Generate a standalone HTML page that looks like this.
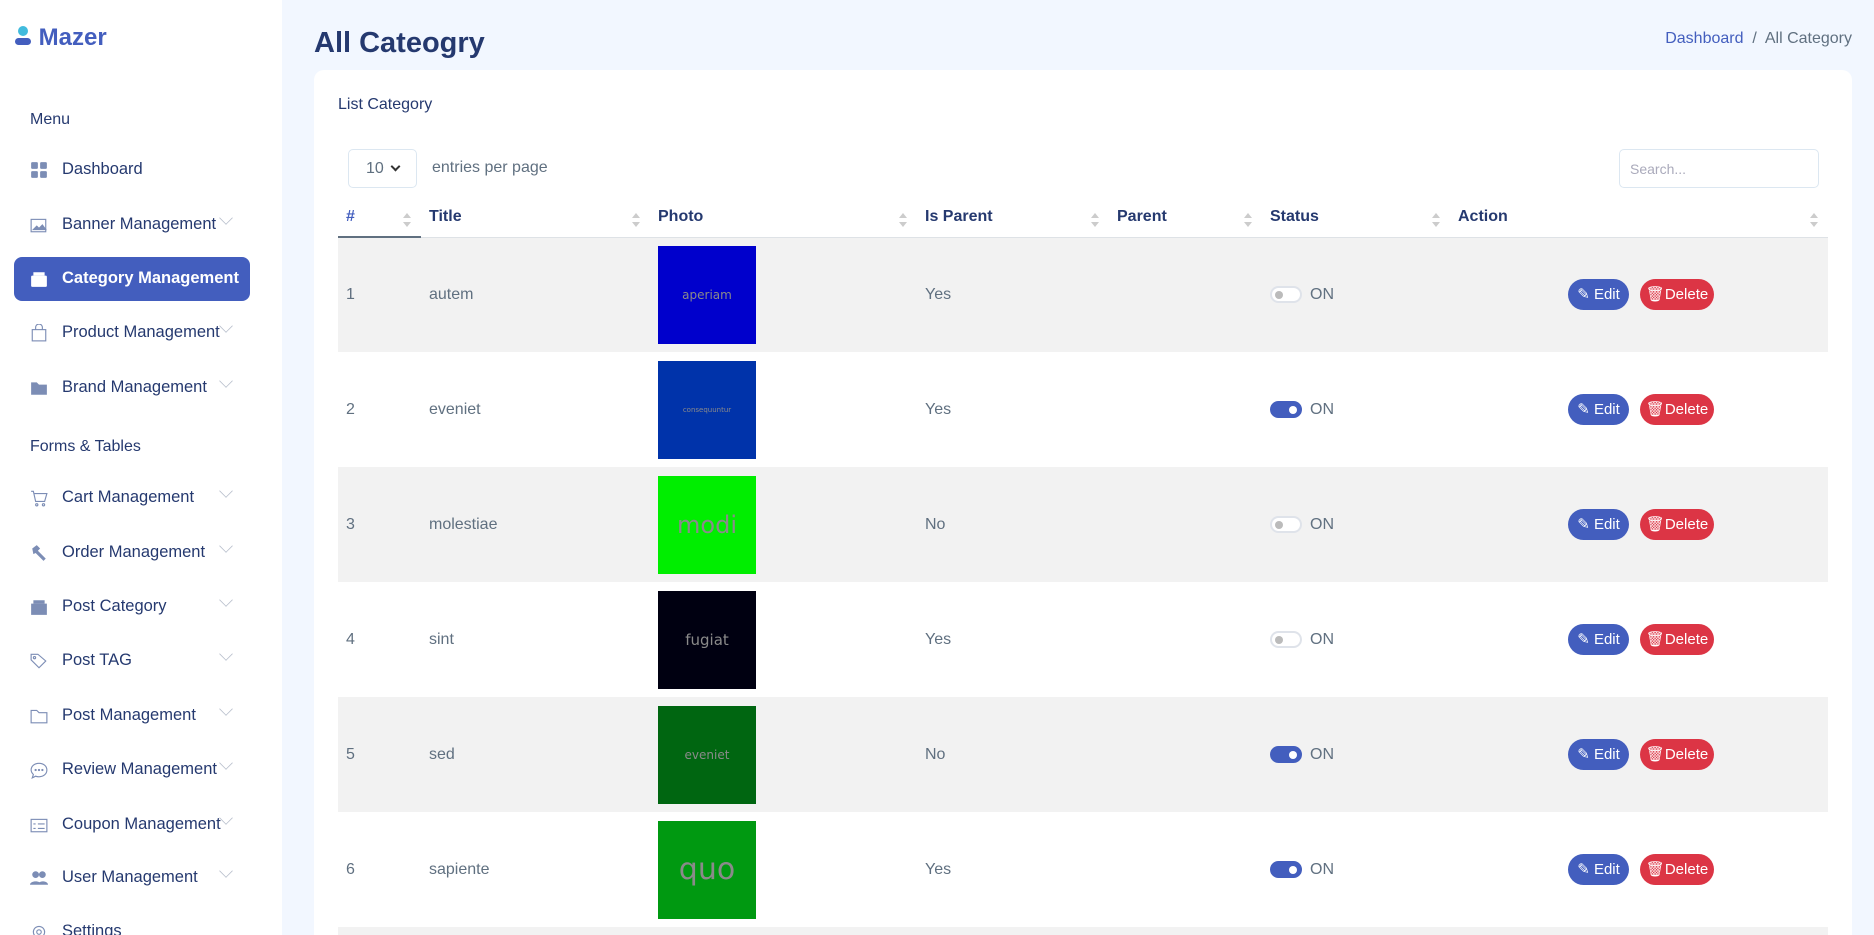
<!DOCTYPE html>
<html><head><meta charset="utf-8"><style>
*{box-sizing:border-box;margin:0;padding:0}
html,body{width:1874px;height:935px;overflow:hidden}
body{background:#f2f7ff;font-family:"Liberation Sans",sans-serif;color:#607080;position:relative}
#w{position:absolute;left:0;top:0;width:1874px;height:935px;overflow:hidden}
.sb{position:absolute;left:0;top:0;width:282px;height:935px;background:#fff}
.abs{position:absolute}
.logo{left:14px;top:24px;font-size:24px;font-weight:bold;color:#435ebe}
.mt{left:30px;font-size:16px;color:#25396f}
.it{position:absolute;left:14px;width:236px;height:44px;font-size:16.5px;color:#25396f}
.it .ic{position:absolute;left:16px;top:13px;width:18px;height:18px}
.it .tx{position:absolute;left:48px;top:12px;white-space:nowrap}
.it .ch{position:absolute;left:206px;top:9px;width:12px;height:12px;border-right:1px solid #b8bfcc;border-bottom:1px solid #b8bfcc;transform:rotate(45deg) scale(.8)}
.it.act{background:#435ebe;border-radius:8px;color:#fff;font-weight:bold}
.card{left:314px;top:70px;width:1538px;height:865px;background:#fff;border-radius:10px 10px 0 0}
table{position:absolute;left:338px;top:197px;width:1490px;border-collapse:collapse;font-size:16px;table-layout:fixed}
th{height:40px;text-align:left;color:#25396f;font-weight:bold;padding-left:8px;border-bottom:1px solid #dee2e6;position:relative}
th:after{content:"";position:absolute;right:10px;top:12px;border:4px solid transparent;border-bottom:5px solid #ccc;height:0}
th:before{content:"";position:absolute;right:10px;top:25px;border:4px solid transparent;border-top:5px solid #ccc;height:0}
td{height:115px;padding-left:8px;color:#607080;vertical-align:middle;white-space:nowrap}
tr.g td{background:#f2f2f2}
tr.last td{height:9px;font-size:0;line-height:0;padding:0}
.ph{width:98px;height:98px;display:flex;align-items:center;justify-content:center;color:#8a8a8a;font-family:"DejaVu Sans",sans-serif}
.tg{display:inline-block;width:32px;height:17px;border-radius:9px;border:2px solid #dfe3ea;background:#fff;position:relative;vertical-align:middle;margin-right:8px}
.tg:after{content:"";position:absolute;left:3px;top:3px;width:8px;height:8px;border-radius:50%;background:#bbb}
.tg.on{background:#435ebe;border-color:#435ebe}
.tg.on:after{left:auto;right:3px;background:#fff}
.b{display:inline-block;height:31px;line-height:31px;border-radius:16px;color:#fff;font-size:15px;white-space:nowrap;text-align:center;vertical-align:middle}
.e{background:#435ebe;width:61px;margin-left:110px}
.d{background:#dc3545;width:74px;margin-left:11px}
</style></head><body><div id="w">
<div class="sb">
<div class="abs logo"><svg width="18" height="20" viewBox="0 0 18 20" style="vertical-align:-1px"><circle cx="9" cy="5" r="5" fill="#41bbdd"/><rect x="1" y="12" width="16" height="7" rx="3.5" fill="#435ebe"/></svg> Mazer</div>
<div class="abs mt" style="top:111px">Menu</div>
<div class="it" style="top:148px"><svg class="ic" viewBox="0 0 16 16"><rect x="1" y="1" width="6" height="6" rx="1" fill="#7c8db5"/><rect x="9" y="1" width="6" height="6" rx="1" fill="#7c8db5"/><rect x="1" y="9" width="6" height="6" rx="1" fill="#7c8db5"/><rect x="9" y="9" width="6" height="6" rx="1" fill="#7c8db5"/></svg><span class="tx">Dashboard</span></div>
<div class="it" style="top:203px"><svg class="ic" viewBox="0 0 16 16" fill="none" stroke="#7c8db5"><rect x="1" y="3" width="13" height="11"/><path d="M3 12l3-3 2 2 3-3 3 4z" fill="#7c8db5"/></svg><span class="tx">Banner Management</span><span class="ch"></span></div>
<div class="it act" style="top:257px"><svg class="ic" viewBox="0 0 16 16"><rect x="1" y="5" width="14" height="10" rx="1" fill="#fff"/><rect x="3" y="2" width="10" height="3" fill="#fff"/></svg><span class="tx">Category Management</span></div>
<div class="it" style="top:311px"><svg class="ic" viewBox="0 0 16 16" fill="none" stroke="#7c8db5"><rect x="2" y="5" width="12" height="10"/><path d="M5 5V3a3 3 0 0 1 6 0v2"/></svg><span class="tx">Product Management</span><span class="ch"></span></div>
<div class="it" style="top:366px"><svg class="ic" viewBox="0 0 16 16"><path d="M1 3h5l2 2h7v9H1z" fill="#7c8db5"/></svg><span class="tx">Brand Management</span><span class="ch"></span></div>
<div class="abs mt" style="top:438px">Forms &amp; Tables</div>
<div class="it" style="top:476px"><svg class="ic" viewBox="0 0 16 16" fill="none" stroke="#7c8db5"><path d="M1 2h2l2 9h8l2-7H4"/><circle cx="6" cy="14" r="1"/><circle cx="12" cy="14" r="1"/></svg><span class="tx">Cart Management</span><span class="ch"></span></div>
<div class="it" style="top:531px"><svg class="ic" viewBox="0 0 16 16"><path d="M2 4l4-3 3 3-2 2 7 7-2 2-7-7-2 1z" fill="#7c8db5"/></svg><span class="tx">Order Management</span><span class="ch"></span></div>
<div class="it" style="top:585px"><svg class="ic" viewBox="0 0 16 16"><rect x="1" y="5" width="14" height="10" fill="#7c8db5"/><rect x="3" y="2" width="10" height="3" fill="#7c8db5"/></svg><span class="tx">Post Category</span><span class="ch"></span></div>
<div class="it" style="top:639px"><svg class="ic" viewBox="0 0 16 16" fill="none" stroke="#7c8db5"><path d="M1 2v5l7 7 6-6-7-6z"/><circle cx="4" cy="5" r="1"/></svg><span class="tx">Post TAG</span><span class="ch"></span></div>
<div class="it" style="top:694px"><svg class="ic" viewBox="0 0 16 16" fill="none" stroke="#7c8db5"><path d="M1 3h5l2 2h7v9H1z"/></svg><span class="tx">Post Management</span><span class="ch"></span></div>
<div class="it" style="top:748px"><svg class="ic" viewBox="0 0 16 16" fill="none" stroke="#7c8db5"><path d="M8 2c4 0 7 2.5 7 6s-3 6-7 6c-1 0-2 0-3-.5L2 15l1-3C2 11 1 9.5 1 8c0-3.5 3-6 7-6z"/><circle cx="5" cy="8" r=".5"/><circle cx="8" cy="8" r=".5"/><circle cx="11" cy="8" r=".5"/></svg><span class="tx">Review Management</span><span class="ch"></span></div>
<div class="it" style="top:803px"><svg class="ic" viewBox="0 0 16 16" fill="none" stroke="#7c8db5"><rect x="1" y="3" width="14" height="11"/><path d="M7 7h6M7 11h6M3 7h2M3 11h2"/></svg><span class="tx">Coupon Management</span><span class="ch"></span></div>
<div class="it" style="top:856px"><svg class="ic" viewBox="0 0 16 16" fill="#7c8db5"><circle cx="5" cy="5" r="3"/><circle cx="11" cy="5" r="3"/><path d="M0 14c0-4 10-4 10 0zM7 14c0-4 9-4 9 0z"/></svg><span class="tx">User Management</span><span class="ch"></span></div>
<div class="abs" style="left:14px;top:910px;width:236px;height:25px;overflow:hidden;font-size:16.5px;color:#25396f"><svg style="position:absolute;left:16px;top:13px" width="18" height="18" viewBox="0 0 16 16" fill="none" stroke="#7c8db5"><circle cx="8" cy="8" r="5"/><circle cx="8" cy="8" r="2"/></svg><span style="position:absolute;left:48px;top:12px">Settings</span></div>
</div>
<div class="abs" style="left:314px;top:27px;font-size:29px;font-weight:bold;color:#25396f">All Cateogry</div>
<div class="abs" style="right:22px;top:30px;font-size:16px;color:#607080"><span style="color:#435ebe">Dashboard</span> &nbsp;/&nbsp; All Category</div>
<div class="abs card"></div>
<div class="abs" style="left:338px;top:96px;font-size:16px;color:#25396f">List Category</div>
<div class="abs" style="left:348px;top:149px;width:69px;height:39px;border:1px solid #dce7f1;border-radius:5px;font-size:16px;padding:10px 0 0 17px;color:#607080">10 <span style="display:inline-block;width:7px;height:7px;border-right:2px solid #333;border-bottom:2px solid #333;transform:rotate(45deg);margin:0 0 3px 4px"></span></div>
<div class="abs" style="left:432px;top:159px;font-size:16px">entries per page</div>
<div class="abs" style="left:1619px;top:149px;width:200px;height:39px;border:1px solid #dce7f1;border-radius:5px;font-size:14px;padding:11px 0 0 10px;color:#aab">Search...</div>
<table>
<colgroup><col style="width:83px"><col style="width:229px"><col style="width:267px"><col style="width:192px"><col style="width:153px"><col style="width:188px"><col></colgroup>
<tr><th style="color:#435ebe;border-bottom:2px solid #607080">#</th><th>Title</th><th>Photo</th><th>Is Parent</th><th>Parent</th><th>Status</th><th>Action</th></tr>
<tr class="g"><td>1</td><td>autem</td><td><div class="ph" style="background:#0000cc;font-size:12px">aperiam</div></td><td>Yes</td><td></td><td><span class="tg"></span>ON</td><td><span class="b e">✎ Edit</span><span class="b d">🗑Delete</span></td></tr>
<tr><td>2</td><td>eveniet</td><td><div class="ph" style="background:#0033aa;font-size:7px">consequuntur</div></td><td>Yes</td><td></td><td><span class="tg on"></span>ON</td><td><span class="b e">✎ Edit</span><span class="b d">🗑Delete</span></td></tr>
<tr class="g"><td>3</td><td>molestiae</td><td><div class="ph" style="background:#00ee00;font-size:24px">modi</div></td><td>No</td><td></td><td><span class="tg"></span>ON</td><td><span class="b e">✎ Edit</span><span class="b d">🗑Delete</span></td></tr>
<tr><td>4</td><td>sint</td><td><div class="ph" style="background:#000011;font-size:15px">fugiat</div></td><td>Yes</td><td></td><td><span class="tg"></span>ON</td><td><span class="b e">✎ Edit</span><span class="b d">🗑Delete</span></td></tr>
<tr class="g"><td>5</td><td>sed</td><td><div class="ph" style="background:#006611;font-size:12px">eveniet</div></td><td>No</td><td></td><td><span class="tg on"></span>ON</td><td><span class="b e">✎ Edit</span><span class="b d">🗑Delete</span></td></tr>
<tr><td>6</td><td>sapiente</td><td><div class="ph" style="background:#009911;font-size:30px">quo</div></td><td>Yes</td><td></td><td><span class="tg on"></span>ON</td><td><span class="b e">✎ Edit</span><span class="b d">🗑Delete</span></td></tr>
<tr class="g last"><td></td><td></td><td></td><td></td><td></td><td></td><td></td></tr>
</table>
</div></body></html>
